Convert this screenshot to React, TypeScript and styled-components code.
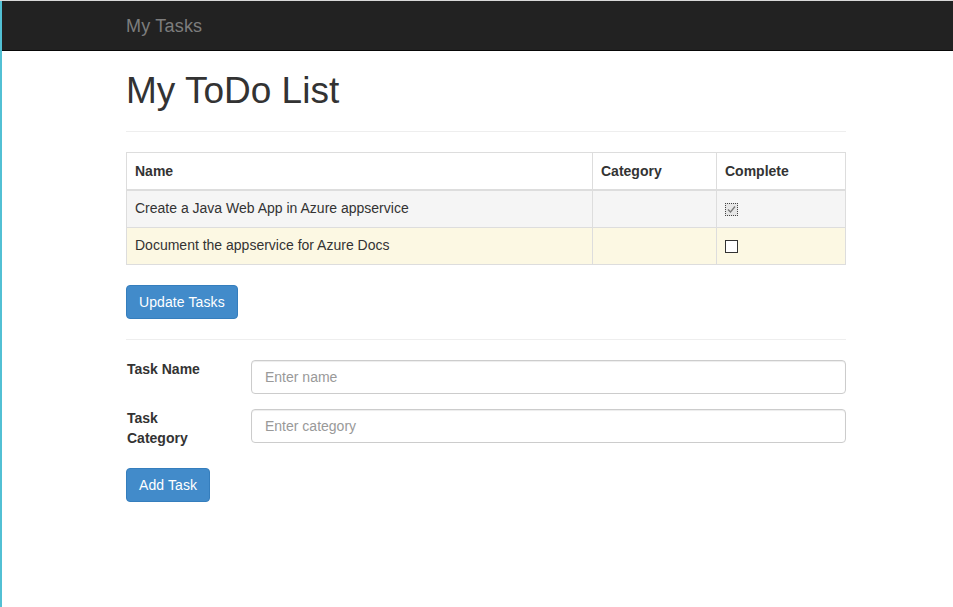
import React, { useState } from "react";
import styled, { createGlobalStyle } from "styled-components";

const GlobalStyle = createGlobalStyle`
  html, body {
    margin: 0;
    padding: 0;
    background: #fff;
  }
  body {
    font-family: "Liberation Sans", Arial, sans-serif;
    font-size: 14px;
    line-height: 20px;
    color: #333;
  }
  * { box-sizing: border-box; }
`;

const Frame = styled.div`
  border-top: 1px solid #d9d9d9;
`;

const Page = styled.div`
  min-height: calc(100vh - 1px);
  border-left: 2px solid #52c0d4;
`;

const Navbar = styled.nav`
  height: 50px;
  background: #222;
  border-bottom: 1px solid #080808;
`;

const Brand = styled.a`
  display: block;
  padding: 15px 0 15px 124px;
  font-size: 18px;
  line-height: 20px;
  color: #7d7d7d;
  text-decoration: none;
  letter-spacing: 0.2px;
`;

const Container = styled.main`
  width: 720px;
  margin-left: 124px;
`;

const Title = styled.h1`
  margin: 19px 0 0;
  font-size: 37px;
  line-height: 41px;
  font-weight: 500;
  color: #333;
`;

const Rule = styled.hr<{ $top?: number }>`
  margin: ${(p) => p.$top ?? 20}px 0 20px;
  border: 0;
  border-top: 1px solid #eee;
`;

const Table = styled.table`
  width: 100%;
  table-layout: fixed;
  border-collapse: collapse;
  border: 1px solid #ddd;
  margin-bottom: 20px;
`;

const Th = styled.th<{ $w?: number }>`
  width: ${(p) => (p.$w ? `${p.$w}px` : "auto")};
  padding: 8px;
  text-align: left;
  font-weight: bold;
  border: 1px solid #ddd;
  border-bottom-width: 2px;
`;

const Row = styled.tr<{ $tone: "muted" | "warning" }>`
  background: ${(p) => (p.$tone === "muted" ? "#f5f5f5" : "#fcf8e3")};
`;

const Td = styled.td`
  padding: 7px 8px 9px;
  border: 1px solid #ddd;
  vertical-align: top;
`;

const Check = styled.span<{ $checked: boolean }>`
  display: inline-flex;
  align-items: center;
  justify-content: center;
  width: 13px;
  height: 13px;
  margin-top: 5px;
  border: 1px ${(p) => (p.$checked ? "dotted #444" : "solid #333")};
  background: ${(p) => (p.$checked ? "#e6e6e6" : "#fff")};
  cursor: pointer;
  vertical-align: top;
`;

const Button = styled.button`
  display: inline-block;
  padding: 6px 12px;
  font-family: inherit;
  font-size: 14px;
  line-height: 20px;
  color: #fff;
  background: #428bca;
  border: 1px solid #357ebd;
  border-radius: 4px;
  cursor: pointer;
  letter-spacing: 0.1px;
`;

const FormGroup = styled.div`
  display: flex;
  align-items: flex-start;
  margin-bottom: 15px;
`;

const Label = styled.label`
  width: 125px;
  flex: none;
  margin: -1px 0 5px;
  padding: 0 40px 0 1px;
  font-weight: bold;
  line-height: 20px;
`;

const Input = styled.input`
  flex: 1;
  height: 34px;
  padding: 6px 13px;
  font-family: inherit;
  font-size: 14px;
  line-height: 20px;
  color: #555;
  background: #fff;
  border: 1px solid #ccc;
  border-radius: 4px;
  box-shadow: inset 0 1px 1px rgba(0, 0, 0, 0.075);
  outline: none;
  &::placeholder {
    color: #999;
  }
`;

const tasks = [
  { name: "Create a Java Web App in Azure appservice", category: "", complete: true },
  { name: "Document the appservice for Azure Docs", category: "", complete: false },
];

const App: React.FC = () => {
  const [items, setItems] = useState(tasks);
  const toggle = (i: number) =>
    setItems((list) => list.map((t, j) => (j === i ? { ...t, complete: !t.complete } : t)));

  return (
    <>
      <GlobalStyle />
      <Frame>
        <Page>
          <Navbar>
            <Brand href="#">My Tasks</Brand>
          </Navbar>
          <Container>
            <Title>My ToDo List</Title>
            <Rule $top={20} />
            <Table>
              <thead>
                <tr>
                  <Th>Name</Th>
                  <Th $w={124}>Category</Th>
                  <Th $w={129}>Complete</Th>
                </tr>
              </thead>
              <tbody>
                {items.map((t, i) => (
                  <Row key={t.name} $tone={i % 2 === 0 ? "muted" : "warning"}>
                    <Td>{t.name}</Td>
                    <Td>{t.category}</Td>
                    <Td>
                      <Check $checked={t.complete} onClick={() => toggle(i)}>
                        {t.complete && (
                          <svg width="9" height="9" viewBox="0 0 9 9">
                            <path d="M1 4.5 L3.5 7 L8 1.5" fill="none" stroke="#777" strokeWidth="1.3" />
                          </svg>
                        )}
                      </Check>
                    </Td>
                  </Row>
                ))}
              </tbody>
            </Table>
            <Button>Update Tasks</Button>
            <Rule />
            <FormGroup>
              <Label>Task Name</Label>
              <Input placeholder="Enter name" />
            </FormGroup>
            <FormGroup>
              <Label>Task Category</Label>
              <Input placeholder="Enter category" />
            </FormGroup>
            <Button>Add Task</Button>
          </Container>
        </Page>
      </Frame>
    </>
  );
};

export default App;
